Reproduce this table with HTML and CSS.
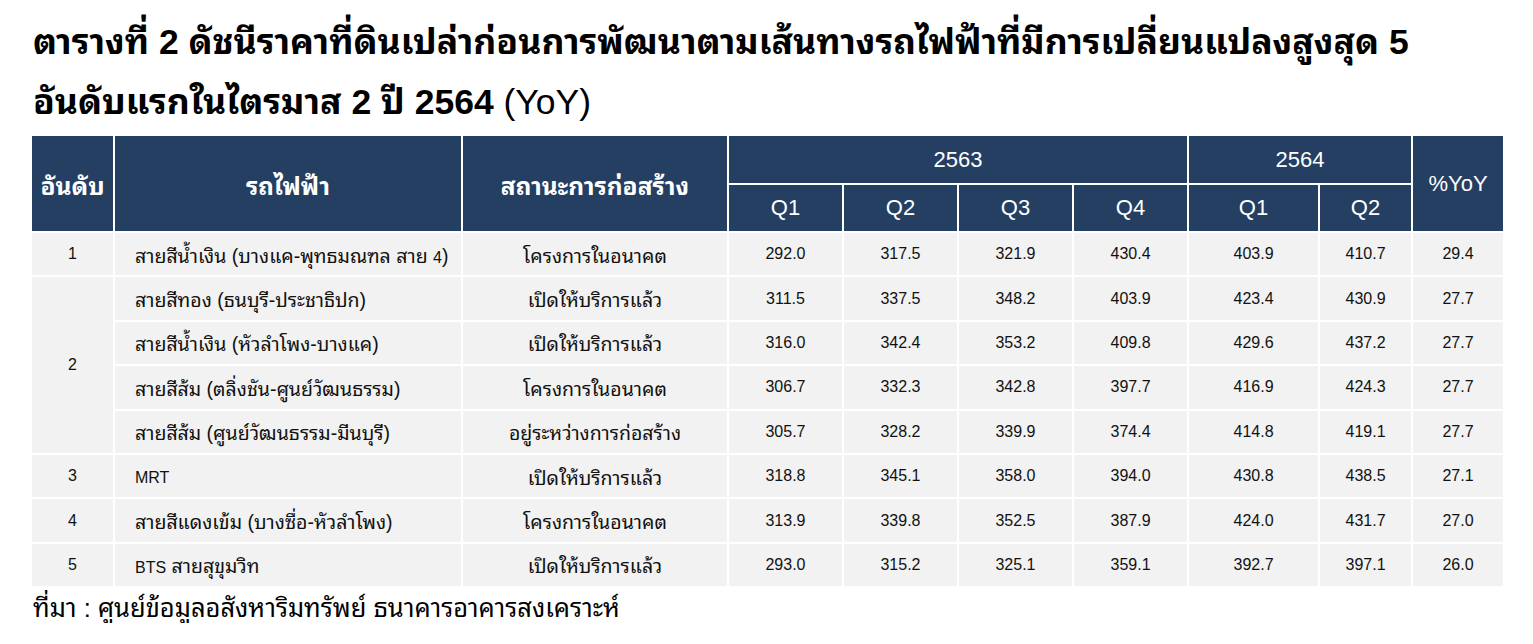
FILE: index.html
```html
<!DOCTYPE html>
<html lang="th">
<head>
<meta charset="utf-8">
<link rel="stylesheet" href="styles.css">
</head>
<body>
<h1 class="title">ตารางที่ 2 ดัชนีราคาที่ดินเปล่าก่อนการพัฒนาตามเส้นทางรถไฟฟ้าที่มีการเปลี่ยนแปลงสูงสุด 5<br>อันดับแรกในไตรมาส 2 ปี 2564 <span class="yoy">(YoY)</span></h1>
<table class="data">
<colgroup>
<col class="c-rank"><col class="c-line"><col class="c-status">
<col class="c-q"><col class="c-q"><col class="c-q"><col class="c-q">
<col class="c-q64a"><col class="c-q64b"><col class="c-yoy">
</colgroup>
<thead>
<tr class="h1">
<th rowspan="2" class="thh">อันดับ</th>
<th rowspan="2" class="thh">รถไฟฟ้า</th>
<th rowspan="2" class="thh">สถานะการก่อสร้าง</th>
<th colspan="4" class="yr">2563</th>
<th colspan="2" class="yr">2564</th>
<th rowspan="2" class="yr">%YoY</th>
</tr>
<tr class="h2">
<th class="q">Q1</th><th class="q">Q2</th><th class="q">Q3</th><th class="q">Q4</th>
<th class="q">Q1</th><th class="q">Q2</th>
</tr>
</thead>
<tbody>
<tr><td>1</td><td class="name">สายสีน้ำเงิน (บางแค-พุทธมณฑล สาย <span class="lat">4</span>)</td><td class="th">โครงการในอนาคต</td><td>292.0</td><td>317.5</td><td>321.9</td><td>430.4</td><td>403.9</td><td>410.7</td><td>29.4</td></tr>
<tr><td rowspan="4">2</td><td class="name">สายสีทอง (ธนบุรี-ประชาธิปก)</td><td class="th">เปิดให้บริการแล้ว</td><td>311.5</td><td>337.5</td><td>348.2</td><td>403.9</td><td>423.4</td><td>430.9</td><td>27.7</td></tr>
<tr><td class="name">สายสีน้ำเงิน (หัวลำโพง-บางแค)</td><td class="th">เปิดให้บริการแล้ว</td><td>316.0</td><td>342.4</td><td>353.2</td><td>409.8</td><td>429.6</td><td>437.2</td><td>27.7</td></tr>
<tr><td class="name">สายสีส้ม (ตลิ่งชัน-ศูนย์วัฒนธรรม)</td><td class="th">โครงการในอนาคต</td><td>306.7</td><td>332.3</td><td>342.8</td><td>397.7</td><td>416.9</td><td>424.3</td><td>27.7</td></tr>
<tr><td class="name">สายสีส้ม (ศูนย์วัฒนธรรม-มีนบุรี)</td><td class="th">อยู่ระหว่างการก่อสร้าง</td><td>305.7</td><td>328.2</td><td>339.9</td><td>374.4</td><td>414.8</td><td>419.1</td><td>27.7</td></tr>
<tr><td>3</td><td class="name"><span class="lat">MRT</span></td><td class="th">เปิดให้บริการแล้ว</td><td>318.8</td><td>345.1</td><td>358.0</td><td>394.0</td><td>430.8</td><td>438.5</td><td>27.1</td></tr>
<tr><td>4</td><td class="name">สายสีแดงเข้ม (บางซื่อ-หัวลำโพง)</td><td class="th">โครงการในอนาคต</td><td>313.9</td><td>339.8</td><td>352.5</td><td>387.9</td><td>424.0</td><td>431.7</td><td>27.0</td></tr>
<tr><td>5</td><td class="name"><span class="lat">BTS</span> สายสุขุมวิท</td><td class="th">เปิดให้บริการแล้ว</td><td>293.0</td><td>315.2</td><td>325.1</td><td>359.1</td><td>392.7</td><td>397.1</td><td>26.0</td></tr>
</tbody>
</table>
<p class="source">ที่มา : ศูนย์ข้อมูลอสังหาริมทรัพย์ ธนาคารอาคารสงเคราะห์</p>
</body>
</html>
```

FILE: styles.css
```css
html, body {
  margin: 0;
  padding: 0;
  background: #ffffff;
}
body {
  padding: 12px 0 0 33px;
  font-family: "Liberation Sans", "Noto Sans Thai Looped", "Noto Sans Thai", sans-serif;
  color: #000;
}
.title {
  margin: 0;
  font-size: 35.5px;
  font-weight: bold;
  line-height: 60px;
}
.title .yoy {
  font-weight: normal;
}
.data {
  margin: 2px 0 0 -3px;
  border-collapse: separate;
  border-spacing: 2px;
  table-layout: fixed;
  width: 1475px;
}
.c-rank { width: 81px; }
.c-line { width: 346px; }
.c-status { width: 264px; }
.c-q { width: 113px; }
.c-q64a { width: 129px; }
.c-q64b { width: 91px; }
.c-yoy { width: 90px; }
.data th {
  background: #243f62;
  color: #ffffff;
  font-weight: bold;
  font-size: 22px;
  padding: 0;
  text-align: center;
}
.data th.thh {
  font-size: 24.5px;
}
.data th.yr, .data th.q {
  font-weight: normal;
}
.data .h1 th { height: 47px; }
.data .h2 th { height: 46px; }
.data td {
  background: #f2f2f2;
  height: 42.4px;
  padding: 0;
  font-size: 16px;
  text-align: center;
  color: #111;
}
.data td.th {
  font-size: 19.5px;
}
.data td.name {
  text-align: left;
  padding-left: 20px;
  font-size: 19.5px;
}
.data .lat {
  font-size: 16px;
}
.source {
  margin: 5px 0 0 0;
  font-size: 25.5px;
  line-height: 30px;
}
```
